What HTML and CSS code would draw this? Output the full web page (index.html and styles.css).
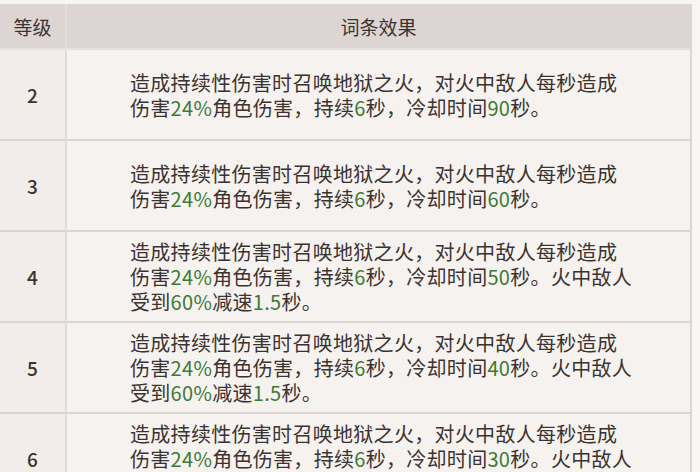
FILE: index.html
```html
<!DOCTYPE html>
<html lang="zh">
<head>
<meta charset="utf-8">
<link rel="stylesheet" href="styles.css">
</head>
<body>
<div class="page">
  <div class="table">
    <div class="cell head lv">等级</div>
    <div class="cell head eff">词条效果</div>

    <div class="cell lv">2</div>
    <div class="cell eff"><p>造成持续性伤害时召唤地狱之火，对火中敌人每秒造成<br>伤害<span class="g">24%</span>角色伤害，持续<span class="g">6</span>秒，冷却时间<span class="g">90</span>秒。</p></div>

    <div class="cell lv">3</div>
    <div class="cell eff"><p>造成持续性伤害时召唤地狱之火，对火中敌人每秒造成<br>伤害<span class="g">24%</span>角色伤害，持续<span class="g">6</span>秒，冷却时间<span class="g">60</span>秒。</p></div>

    <div class="cell lv">4</div>
    <div class="cell eff"><p>造成持续性伤害时召唤地狱之火，对火中敌人每秒造成<br>伤害<span class="g">24%</span>角色伤害，持续<span class="g">6</span>秒，冷却时间<span class="g">50</span>秒。火中敌人<br>受到<span class="g">60%</span>减速<span class="g">1.5</span>秒。</p></div>

    <div class="cell lv">5</div>
    <div class="cell eff"><p>造成持续性伤害时召唤地狱之火，对火中敌人每秒造成<br>伤害<span class="g">24%</span>角色伤害，持续<span class="g">6</span>秒，冷却时间<span class="g">40</span>秒。火中敌人<br>受到<span class="g">60%</span>减速<span class="g">1.5</span>秒。</p></div>

    <div class="cell lv">6</div>
    <div class="cell eff"><p>造成持续性伤害时召唤地狱之火，对火中敌人每秒造成<br>伤害<span class="g">24%</span>角色伤害，持续<span class="g">6</span>秒，冷却时间<span class="g">30</span>秒。火中敌人<br>受到<span class="g">60%</span>减速<span class="g">1.5</span>秒。</p></div>
  </div>
</div>
</body>
</html>
```

FILE: styles.css
```css
html, body {
  margin: 0;
  padding: 0;
  background: #f8f6f4;
  overflow: hidden;
}
.page {
  width: 700px;
  height: 472px;
  padding-top: 4px;
  box-sizing: border-box;
  overflow: hidden;
  font-family: "Noto Sans CJK SC", "Noto Sans", sans-serif;
  color: #3b3330;
}
.table {
  width: 692px;
  display: grid;
  grid-template-columns: 67px 1fr;
  grid-auto-rows: 91px;
  grid-template-rows: 46px;
  border-right: 2px solid #dcd6d3;
  box-sizing: border-box;
}
.cell {
  display: flex;
  align-items: center;
  border-bottom: 2px solid #dbd5d2;
  box-sizing: border-box;
  font-size: 20px;
}
.cell.lv {
  justify-content: center;
  background: #f2ecea;
  border-right: 2px solid #e2dcd9;
  font-size: 19px;
  font-weight: 500;
}
.cell.eff {
  background: #f6f2ef;
  padding-left: 63px;
}
.cell.head {
  background: #dcd5d4;
  border-bottom: 2px solid #e6e1de;
  font-size: 19px;
  font-weight: 400;
}
.cell.head.eff {
  justify-content: center;
  padding-left: 0;
}
.cell.head.lv {
  border-right: 2px solid #e4dfdd;
}
.eff p {
  margin: 0;
  line-height: 25px;
  font-size: 20px;
  letter-spacing: 0.3px;
}
.g {
  color: #3c7a36;
}
```
